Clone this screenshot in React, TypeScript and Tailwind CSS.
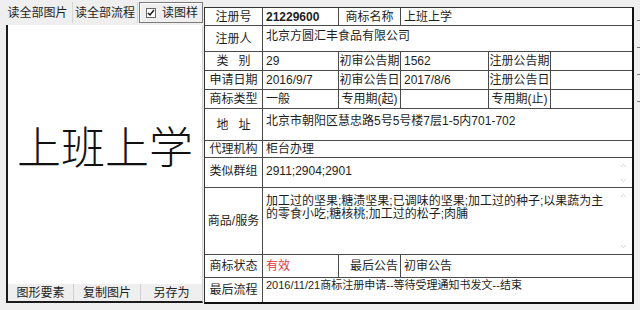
import React from 'react';
import { ChevronUp, ChevronDown } from 'lucide-react';

const Label: React.FC<{ children: React.ReactNode; className?: string }> = ({ children, className = '' }) => (
  <div className={`bg-white flex items-center justify-center whitespace-nowrap ${className}`}>{children}</div>
);

const Value: React.FC<{ children?: React.ReactNode; className?: string }> = ({ children, className = '' }) => (
  <div className={`bg-white pl-[3px] whitespace-nowrap ${className}`}>{children}</div>
);

const Scroll: React.FC<{ className?: string }> = ({ className = '' }) => (
  <div className={`absolute right-[4px] flex flex-col justify-between items-center text-[#b5b5b5] ${className}`}>
    <ChevronUp size={9} strokeWidth={1.5} />
    <ChevronDown size={9} strokeWidth={1.5} />
  </div>
);

export default function App() {
  return (
    <div className="w-[640px] h-[310px] bg-[#efefef] flex overflow-hidden text-[12px] text-[#1e1e1e] font-['Liberation_Sans','Noto_Sans_CJK_SC',sans-serif]">
      {/* left preview panel */}
      <div className="w-[204px] flex flex-col">
        <div className="h-[25px] flex items-start pt-[2px] pl-[3px]">
          <div className="h-[21px] w-[70px] flex items-center justify-center border-r border-[#d6d6d6]">读全部图片</div>
          <div className="h-[21px] w-[65px] flex items-center justify-center border-r border-[#d6d6d6]">读全部流程</div>
          <div className="h-[21px] w-[64px] ml-[1px] flex items-center gap-[6px] pl-[6px] border border-[#7a7a7a] shadow-[inset_1px_1px_0_#fff]">
            <span className="w-[10px] h-[10px] bg-white border border-[#666] flex items-center justify-center">
              <svg width="8" height="8" viewBox="0 0 8 8">
                <path d="M1 4 L3 6 L7 1" fill="none" stroke="#111" strokeWidth="1.4" />
              </svg>
            </span>
            <span>读图样</span>
          </div>
        </div>
        <div className="ml-[6px] mr-[1px] h-[278px] bg-white border-l-2 border-b-2 border-[#1c1c1c] border-r border-r-[#cfcfcf] flex flex-col">
          <div className="flex-1 flex items-center justify-center pb-[20px]">
            <span className="text-[44px] leading-none tracking-[0px] font-light text-[#111] font-['Noto_Sans_CJK_SC',serif]">上班上学</span>
          </div>
          <div className="h-[17px] bg-[#efefef] flex text-[#222]">
            <div className="w-[66px] flex items-center justify-center border-r border-[#cfcfcf]">图形要素</div>
            <div className="w-[67px] flex items-center justify-center border-r border-[#cfcfcf]">复制图片</div>
            <div className="flex-1 flex items-center justify-center">另存为</div>
          </div>
        </div>
      </div>

      {/* detail table */}
      <div className="mt-[7px] w-[430px] h-[297px] border-t border-l border-[#333] border-r-2 border-b-2 border-r-[#111] border-b-[#111] bg-[#4a4a4a] grid gap-px grid-cols-[57px_75px_61px_87px_61px_1fr] grid-rows-[17px_25px_18px_18px_18px_31px_16px_29px_66px_22px_24px]">
        <Label>注册号</Label>
        <Value className="flex items-center font-bold">21229600</Value>
        <Label>商标名称</Label>
        <Value className="col-span-3 flex items-center">上班上学</Value>

        <Label>注册人</Label>
        <Value className="col-span-5 pt-[1px]">北京方圆汇丰食品有限公司</Value>

        <Label>类&nbsp;&nbsp;&nbsp;别</Label>
        <Value className="flex items-center">29</Value>
        <Label>初审公告期</Label>
        <Value className="flex items-center">1562</Value>
        <Label>注册公告期</Label>
        <Value />

        <Label>申请日期</Label>
        <Value className="flex items-center">2016/9/7</Value>
        <Label>初审公告日</Label>
        <Value className="flex items-center">2017/8/6</Value>
        <Label>注册公告日</Label>
        <Value />

        <Label>商标类型</Label>
        <Value className="flex items-center">一般</Value>
        <Label>专用期(起)</Label>
        <Value />
        <Label>专用期(止)</Label>
        <Value />

        <Label>地&nbsp;&nbsp;&nbsp;址</Label>
        <Value className="col-span-5 pt-[3px]">北京市朝阳区慧忠路5号5号楼7层1-5内701-702</Value>

        <Label>代理机构</Label>
        <Value className="col-span-5 flex items-center">柜台办理</Value>

        <Label className="!items-start pt-[4px]">类似群组</Label>
        <Value className="col-span-5 relative pt-[4px]">
          2911;2904;2901
          <Scroll className="top-[3px] h-[24px]" />
        </Value>

        <Label>商品/服务</Label>
        <Value className="col-span-5 relative pt-[7px] leading-[13px]">
          加工过的坚果;糖渍坚果;已调味的坚果;加工过的种子;以果蔬为主
          <br />
          的零食小吃;糖核桃;加工过的松子;肉脯
          <Scroll className="top-[3px] h-[60px]" />
        </Value>

        <Label>商标状态</Label>
        <Value className="flex items-center text-[#e8323a]">有效</Value>
        <Label className="!justify-end pr-[2px]">最后公告</Label>
        <Value className="col-span-3 flex items-center">初审公告</Value>

        <Label>最后流程</Label>
        <Value className="col-span-5 text-[11px] pt-[1px] leading-[13px]">2016/11/21商标注册申请--等待受理通知书发文--结束</Value>
      </div>

      <div className="flex-1 flex flex-col items-start pt-[20px] gap-[26px] pl-[3px]">
        <div className="w-[3px] h-px bg-[#777]" />
        <div className="w-[3px] h-px bg-[#777]" />
        <div className="w-[3px] h-px bg-[#777]" />
        <div className="w-[3px] h-px bg-[#777]" />
      </div>
    </div>
  );
}
